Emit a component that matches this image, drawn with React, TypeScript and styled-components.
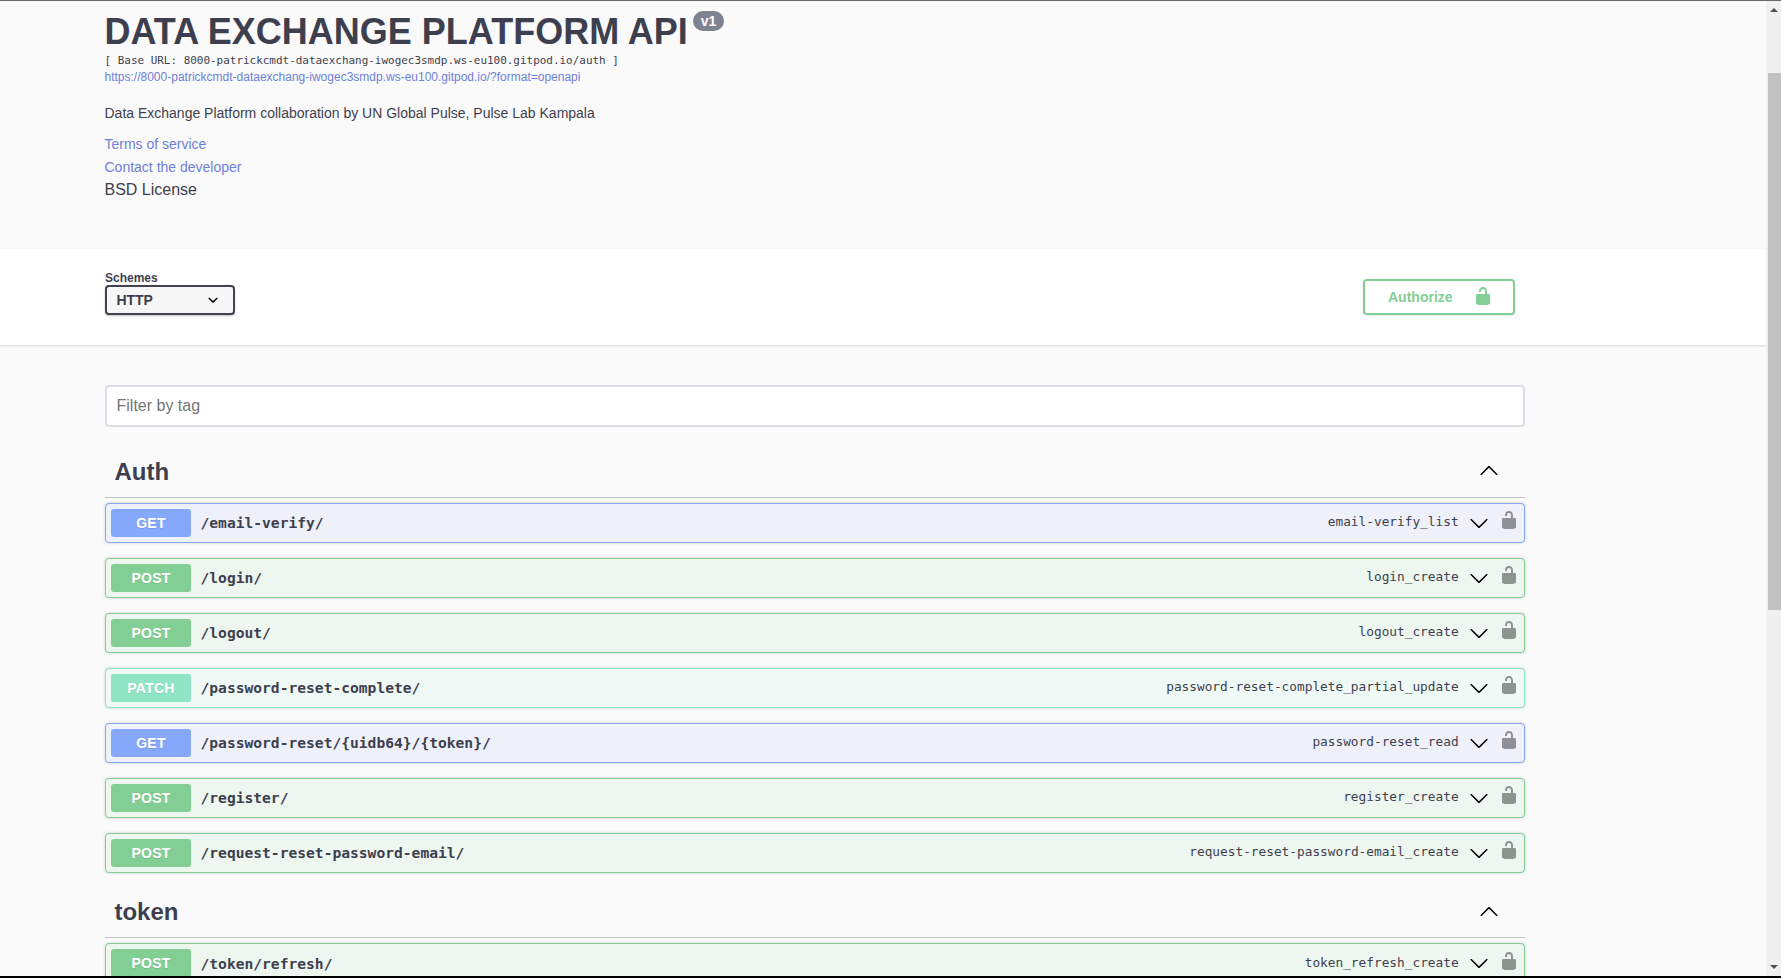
import React from 'react';
import styled, { createGlobalStyle } from 'styled-components';

const GlobalStyle = createGlobalStyle`
  *, *::before, *::after { box-sizing: border-box; }
  body { margin: 0; background: #fafafa; overflow: hidden; }
  h1, h2, h3, p, pre { margin: 0; }
`;

const sans = '"Liberation Sans", Arial, sans-serif';
const mono = '"DejaVu Sans Mono", Consolas, monospace';
const ink = '#3e3f4e';

type Method = 'GET' | 'POST' | 'PATCH';

const methodColors: Record<Method, { solid: string; tint: string }> = {
  GET: { solid: '#85a8fa', tint: '#eef1fa' },
  POST: { solid: '#83ce95', tint: '#edf6ef' },
  PATCH: { solid: '#8fe5c3', tint: '#eff9f5' },
};

const Window = styled.div`
  display: flex;
  height: 978px;
  border-top: 1px solid #6a686b;
  border-bottom: 2px solid #000;
  overflow: hidden;
  font-family: ${sans};
  color: ${ink};
`;

const Page = styled.main`
  flex: 1;
  min-width: 0;
  overflow: hidden;
  background: #fafafa;
`;

const Info = styled.header`
  height: 248px;
  padding: 9px 0 0 104.5px;
`;

const TitleRow = styled.div`
  display: flex;
  align-items: flex-start;
  height: 43px;
`;

const Title = styled.h1`
  font-size: 36px;
  line-height: 44px;
  font-weight: 700;
  white-space: nowrap;
`;

const Version = styled.span`
  height: 20px;
  margin: 1px 0 0 5.4px;
  padding: 0 7.5px;
  border-radius: 57px;
  background: #7f8290;
  color: #fff;
  font-size: 14px;
  line-height: 20px;
  font-weight: 700;
`;

const BaseUrl = styled.pre`
  height: 16px;
  font-family: ${mono};
  font-size: 10.96px;
  line-height: 16px;
`;

const SpecLink = styled.a`
  display: block;
  height: 16px;
  color: #6f80d8;
  font-size: 12px;
  line-height: 16px;
`;

const Description = styled.p`
  margin-top: 18px;
  height: 20px;
  font-size: 14px;
  line-height: 20px;
`;

const MetaLinks = styled.div`
  margin-top: 10px;
  font-size: 14px;
`;

const MetaLink = styled.a`
  display: block;
  height: 23px;
  line-height: 23px;
  color: #6f80d8;
`;

const License = styled.div`
  height: 22px;
  font-size: 16px;
  line-height: 22px;
`;

const SchemeBar = styled.section`
  display: flex;
  justify-content: space-between;
  align-items: flex-start;
  height: 96px;
  padding: 22px 251px 0 105px;
  background: #fff;
  box-shadow: 0 1px 2px rgba(0, 0, 0, 0.15);
`;

const SchemeField = styled.label`
  display: block;
  font-size: 12px;
  line-height: 14px;
  font-weight: 700;
`;

const Select = styled.span`
  display: flex;
  align-items: center;
  justify-content: space-between;
  width: 130px;
  height: 30px;
  padding: 0 10px 0 9.4px;
  border: 2px solid #41444e;
  border-radius: 4px;
  background: #f7f7f7;
  box-shadow: 0 1px 2px rgba(0, 0, 0, 0.25);
  font-size: 14px;
`;

const AuthorizeButton = styled.button`
  display: flex;
  align-items: center;
  justify-content: space-between;
  width: 152px;
  height: 36px;
  margin-top: 8px;
  padding: 0 20px 0 23px;
  border: 2px solid #83ce95;
  border-radius: 4px;
  background: #fff;
  box-shadow: 0 1px 2px rgba(0, 0, 0, 0.1);
  color: #83ce95;
  font: 700 14px ${sans};

  svg { margin-bottom: 2px; }
`;

const Content = styled.div`
  width: 1420px;
  margin: 40px 0 0 105px;
`;

const Filter = styled.input`
  display: block;
  width: 100%;
  height: 42px;
  padding: 0 9.5px 1px;
  border: 2px solid #d8dde7;
  border-radius: 4px;
  background: #fff;
  font: 400 16px ${sans};
  &::placeholder { color: #757575; opacity: 1; }
`;

const TagSection = styled.section`
  padding-top: 20px;
  & + & { padding-top: 14px; }
`;

const TagHeader = styled.h3`
  display: flex;
  justify-content: space-between;
  height: 51px;
  padding: 10px 26px 0 9.4px;
  border-bottom: 1px solid rgba(59, 65, 81, 0.3);
  font-size: 24px;
  line-height: 30px;
`;

const Operations = styled.div`
  display: flex;
  flex-direction: column;
  gap: 15px;
  padding-top: 5px;
`;

const Operation = styled.div<{ $method: Method }>`
  display: flex;
  align-items: center;
  height: 40px;
  padding: 0 5px;
  border: 1px solid ${p => methodColors[p.$method].solid};
  border-radius: 4px;
  background: ${p => methodColors[p.$method].tint};
  box-shadow: 0 0 3px rgba(0, 0, 0, 0.19);
`;

const MethodLabel = styled.span<{ $method: Method }>`
  width: 80px;
  height: 28px;
  border-radius: 3px;
  background: ${p => methodColors[p.$method].solid};
  color: #fff;
  font-size: 14px;
  line-height: 28px;
  font-weight: 700;
  letter-spacing: 0.25px;
  text-align: center;
  text-shadow: 0 1px 0 rgba(0, 0, 0, 0.1);
`;

const Path = styled.span<{ $drop: number }>`
  flex: 1;
  padding: 0 9.5px;
  font: 700 14.61px/20px ${mono};
  transform: translateY(${p => p.$drop}px);
`;

const OperationId = styled.span<{ $drop: number }>`
  padding-right: 10.4px;
  font: 400 12.79px/20px ${mono};
  transform: translateY(${p => p.$drop - 1}px);
`;

const LockSlot = styled.span<{ $drop: number }>`
  display: flex;
  height: 20px;
  margin: 0 0 0 10px;
  opacity: 0.4;
  color: #000;
  transform: translateY(${p => p.$drop - 3}px);
`;

const Icon = styled.svg<{ $up?: boolean }>`
  display: block;
  flex: none;
  fill: currentColor;
  transform: ${p => (p.$up ? 'rotate(180deg)' : 'none')};
`;

const HeaderArrow = styled.span<{ $drop: number }>`
  margin-top: ${p => p.$drop + 4}px;
`;

const ScrollTrack = styled.aside`
  display: flex;
  flex-direction: column;
  align-items: flex-end;
  width: 15px;
  background: #f0f0f0;
`;

const ScrollArrow = styled.span<{ $down?: boolean }>`
  width: 0;
  height: 0;
  margin: ${p => (p.$down ? 'auto 3px 7px' : '7px 3px 0')};
  border-left: 4px solid transparent;
  border-right: 4px solid transparent;
  border-top: ${p => (p.$down ? '4px solid #505050' : '0')};
  border-bottom: ${p => (p.$down ? '0' : '4px solid #505050')};
`;

const ScrollThumb = styled.span`
  width: 13px;
  height: 537px;
  margin-top: 61px;
  background: #c1c1c1;
`;

const Arrow = ({ up }: { up?: boolean }) => (
  <Icon width="20" height="20" viewBox="0 0 20 20" $up={up} color="#000">
    <path d="M17.418 6.109c.272-.268.709-.268.979 0s.271.701 0 .969l-7.908 7.83c-.27.268-.707.268-.979 0l-7.908-7.83c-.27-.268-.271-.701 0-.969.271-.268.709-.268.979 0L10 13.25l7.418-7.141z" />
  </Icon>
);

const Unlocked = () => (
  <Icon width="20" height="20" viewBox="0 0 20 20">
    <path d="M15.8 8H14V5.6C14 2.703 12.665 1 10 1 7.334 1 6 2.703 6 5.6V6h2v-.801C8 3.754 8.797 3 10 3c1.203 0 2 .754 2 2.199V8H4c-.553 0-1 .646-1 1.199V17c0 .549.428 1.139.951 1.307l1.197.387C5.672 18.861 6.55 19 7.1 19h5.8c.549 0 1.428-.139 1.951-.307l1.196-.387c.524-.167.953-.757.953-1.306V9.199C17 8.646 16.352 8 15.8 8z" />
  </Icon>
);

const SelectChevron = () => (
  <Icon width="20" height="20" viewBox="0 0 20 20" color="#000">
    <path d="M13.418 7.859c.271-.268.709-.268.978 0 .27.268.272.701 0 .969l-3.908 3.83c-.27.268-.707.268-.979 0l-3.908-3.83c-.27-.267-.27-.701 0-.969.271-.268.709-.268.978 0L10 11l3.418-3.141z" />
  </Icon>
);

const tags: { name: string; drop: number; operations: [Method, string, string][] }[] = [
  {
    name: 'Auth',
    drop: 0,
    operations: [
      ['GET', '/email-verify/', 'email-verify_list'],
      ['POST', '/login/', 'login_create'],
      ['POST', '/logout/', 'logout_create'],
      ['PATCH', '/password-reset-complete/', 'password-reset-complete_partial_update'],
      ['GET', '/password-reset/{uidb64}/{token}/', 'password-reset_read'],
      ['POST', '/register/', 'register_create'],
      ['POST', '/request-reset-password-email/', 'request-reset-password-email_create'],
    ],
  },
  { name: 'token', drop: 1, operations: [['POST', '/token/refresh/', 'token_refresh_create']] },
];

export default function App() {
  return (
    <Window>
      <GlobalStyle />
      <Page>
        <Info>
          <TitleRow>
            <Title>DATA EXCHANGE PLATFORM API</Title>
            <Version>v1</Version>
          </TitleRow>
          <BaseUrl>[ Base URL: 8000-patrickcmdt-dataexchang-iwogec3smdp.ws-eu100.gitpod.io/auth ]</BaseUrl>
          <SpecLink>https://8000-patrickcmdt-dataexchang-iwogec3smdp.ws-eu100.gitpod.io/?format=openapi</SpecLink>
          <Description>Data Exchange Platform collaboration by UN Global Pulse, Pulse Lab Kampala</Description>
          <MetaLinks>
            <MetaLink>Terms of service</MetaLink>
            <MetaLink>Contact the developer</MetaLink>
            <License>BSD License</License>
          </MetaLinks>
        </Info>
        <SchemeBar>
          <SchemeField>
            Schemes
            <Select>
              HTTP
              <SelectChevron />
            </Select>
          </SchemeField>
          <AuthorizeButton>
            Authorize
            <Unlocked />
          </AuthorizeButton>
        </SchemeBar>
        <Content>
          <Filter placeholder="Filter by tag" />
          {tags.map(tag => (
            <TagSection key={tag.name}>
              <TagHeader>
                {tag.name}
                <HeaderArrow $drop={tag.drop}>
                  <Arrow up />
                </HeaderArrow>
              </TagHeader>
              <Operations>
                {tag.operations.map(([method, path, id]) => (
                  <Operation key={path} $method={method}>
                    <MethodLabel $method={method}>{method}</MethodLabel>
                    <Path $drop={tag.drop}>{path}</Path>
                    <OperationId $drop={tag.drop}>{id}</OperationId>
                    <Arrow />
                    <LockSlot $drop={tag.drop}>
                      <Unlocked />
                    </LockSlot>
                  </Operation>
                ))}
              </Operations>
            </TagSection>
          ))}
        </Content>
      </Page>
      <ScrollTrack>
        <ScrollArrow />
        <ScrollThumb />
        <ScrollArrow $down />
      </ScrollTrack>
    </Window>
  );
}
